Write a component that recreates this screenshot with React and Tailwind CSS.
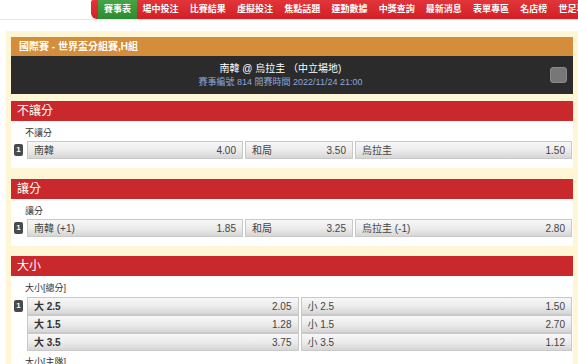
import React from 'react';

const navItems = ['賽事表', '場中投注', '比賽結果', '虛擬投注', '焦點話題', '運動數據', '中獎查詢', '最新消息', '表單專區', '名店榜', '世足專區'];

const OddsButton = ({ label, odds, className = '', bold = false }) => (
  <div
    className={`h-[18px] flex items-center justify-between px-[6px] border border-[#c9c9c9] bg-gradient-to-b from-[#f7f7f7] via-[#ececec] to-[#d6d6d6] text-[10px] ${bold ? 'font-bold text-[#333]' : 'text-[#444]'} ${className}`}
  >
    <span>{label}</span>
    <span className="font-normal text-[#444]">{odds}</span>
  </div>
);

const Badge = () => (
  <div className="w-[9px] h-[12px] mt-[3px] rounded-[2px] bg-[#4a4a4a] text-white text-[8px] font-bold leading-[12px] text-center shrink-0">1</div>
);

const Section = ({ title, children, className = '' }) => (
  <div className={className}>
    <div className="h-[20px] bg-[#c9282c] text-white text-[12px] leading-[20px] pl-[6px]">{title}</div>
    <div className="bg-white pt-[6px] pb-[9px]">{children}</div>
  </div>
);

const App = () => {
  return (
    <div className="w-[578px] h-[364px] overflow-hidden bg-white relative font-['Liberation_Sans','Noto_Sans_CJK_TC',sans-serif]">
      {/* top nav */}
      <div className="h-[20px] border-b border-[#efe4e4] flex">
        <div className="ml-[91px] h-[19px] flex items-stretch bg-gradient-to-b from-[#e3343a] to-[#cf2027] rounded-bl-[6px] rounded-tl-[2px] pl-[7px] whitespace-nowrap shrink-0">
          {navItems.map((item, i) => (
            <div
              key={item}
              className={`flex items-center text-[9px] font-bold text-white ${i === 0 ? 'bg-gradient-to-b from-[#45a445] to-[#2d8a31] px-[6px]' : 'px-[5.6px]'}`}
            >
              {item}
            </div>
          ))}
        </div>
      </div>

      {/* main panel */}
      <div className="mt-[11px] ml-[6px] bg-[#fff6d6] px-[5px] pt-[6px] pb-[20px]">
        <div className="h-[19px] bg-[#d48d3b] text-white text-[10px] font-bold leading-[19px] pl-[8px]">國際賽 - 世界盃分組賽,H組</div>
        <div className="h-[38px] bg-[#2b2b2b] flex items-center relative">
          <div className="flex-1 flex flex-col items-center">
            <div className="text-white text-[10px] leading-[14px]">南韓 @ 烏拉圭 （中立場地)</div>
            <div className="text-[#8ea7da] text-[9px] leading-[12px]">賽事編號 814 開賽時間 2022/11/24 21:00</div>
          </div>
          <div className="w-[17px] h-[16px] rounded-[3px] bg-[#777] border border-[#8a8a8a] mr-[6px]" />
        </div>

        <Section title="不讓分" className="mt-[7px]">
          <div className="pl-[14px] text-[9px] text-[#333] leading-[12px]">不讓分</div>
          <div className="flex gap-[2px] mt-[2px] pl-[3px] pr-[1px]">
            <Badge />
            <div className="flex gap-[2px] ml-[2px] flex-1">
              <OddsButton label="南韓" odds="4.00" className="w-[216px]" />
              <OddsButton label="和局" odds="3.50" className="w-[108px]" />
              <OddsButton label="烏拉圭" odds="1.50" className="flex-1" />
            </div>
          </div>
        </Section>

        <Section title="讓分" className="mt-[11px]">
          <div className="pl-[14px] text-[9px] text-[#333] leading-[12px]">讓分</div>
          <div className="flex gap-[2px] mt-[2px] pl-[3px] pr-[1px]">
            <Badge />
            <div className="flex gap-[2px] ml-[2px] flex-1">
              <OddsButton label="南韓 (+1)" odds="1.85" className="w-[216px]" />
              <OddsButton label="和局" odds="3.25" className="w-[108px]" />
              <OddsButton label="烏拉圭 (-1)" odds="2.80" className="flex-1" />
            </div>
          </div>
        </Section>

        <Section title="大小" className="mt-[10px]">
          <div className="pl-[14px] text-[9px] text-[#333] leading-[12px]">大小[總分]</div>
          <div className="flex gap-[2px] mt-[3px] pl-[3px] pr-[1px]">
            <Badge />
            <div className="grid grid-cols-2 gap-x-[2px] ml-[2px] flex-1">
              <OddsButton label="大 2.5" odds="2.05" bold />
              <OddsButton label="小 2.5" odds="1.50" />
              <OddsButton label="大 1.5" odds="1.28" bold />
              <OddsButton label="小 1.5" odds="2.70" />
              <OddsButton label="大 3.5" odds="3.75" bold />
              <OddsButton label="小 3.5" odds="1.12" />
            </div>
          </div>
          <div className="pl-[14px] text-[9px] text-[#333] leading-[12px] mt-[5px]">大小[主隊]</div>
        </Section>
      </div>
    </div>
  );
};

export default App;
